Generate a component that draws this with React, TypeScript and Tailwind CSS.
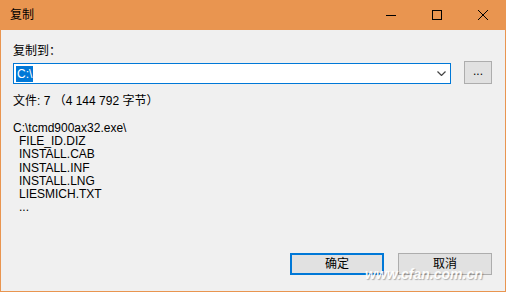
import { useState } from 'react';

const files = ['FILE_ID.DIZ', 'INSTALL.CAB', 'INSTALL.INF', 'INSTALL.LNG', 'LIESMICH.TXT', '...'];

export default function App() {
  const [path] = useState('C:\\');

  return (
    <div
      className="relative w-[506px] h-[292px] flex flex-col bg-[#f0f0f0] border border-t-0 border-[#e99550] text-[12px] text-black overflow-hidden"
      style={{ fontFamily: '"Liberation Sans", "Noto Sans CJK SC", sans-serif' }}
    >
      <div className="h-[30px] -mx-px flex items-center bg-[#e99550] shrink-0">
        <span className="pl-[10px] flex-1">复制</span>
        <div className="flex h-full">
          <div className="w-[46px] flex items-center justify-center">
            <svg width="10" height="10" viewBox="0 0 10 10">
              <path d="M0 5.5h10" stroke="#000" strokeWidth="1" />
            </svg>
          </div>
          <div className="w-[46px] flex items-center justify-center">
            <svg width="10" height="10" viewBox="0 0 10 10">
              <rect x="0.5" y="0.5" width="9" height="9" fill="none" stroke="#000" strokeWidth="1" />
            </svg>
          </div>
          <div className="w-[46px] flex items-center justify-center">
            <svg width="10" height="10" viewBox="0 0 10 10">
              <path d="M0 0L10 10M10 0L0 10" stroke="#000" strokeWidth="1" />
            </svg>
          </div>
        </div>
      </div>

      <div className="flex flex-col flex-1 pl-[12px] pr-[12px] pt-[14px]">
        <div className="h-[14px] leading-[14px]">复制到：</div>
        <div className="flex items-end gap-[13px] mt-[3px]">
          <div className="w-[438px] h-[21px] bg-white border border-[#0078d7] flex items-center pl-[2px] pr-[4px]">
            <span className="bg-[#0078d7] text-white leading-[16px] px-px">{path}</span>
            <span className="flex-1" />
            <svg width="9" height="5" viewBox="0 0 9 5">
              <path d="M0.5 0.5L4.5 4.5L8.5 0.5" fill="none" stroke="#444" strokeWidth="1.2" />
            </svg>
          </div>
          <div className="w-[28px] h-[23px] bg-[#e1e1e1] border border-[#adadad] flex items-center justify-center leading-none pb-[3px]">
            ...
          </div>
        </div>
        <div className="mt-[10px] h-[15px] leading-[15px]">文件: 7 （4 144 792 字节）</div>
        <div className="mt-[13px] flex flex-col leading-[13.2px]">
          <div>C:\tcmd900ax32.exe\</div>
          {files.map((f) => (
            <div key={f} className="pl-[6px]">
              {f}
            </div>
          ))}
        </div>
        <div className="mt-auto mb-[16px] flex justify-end gap-[14px] pr-[1px]">
          <button className="w-[94px] h-[22px] bg-[#e1e1e1] border-2 border-[#0078d7] flex items-center justify-center">
            确定
          </button>
          <button className="w-[94px] h-[22px] bg-[#e1e1e1] border border-[#adadad] flex items-center justify-center">
            取消
          </button>
        </div>
      </div>

      <div
        className="absolute left-[364px] top-[266px] text-[14px] leading-[17px] italic font-bold text-white pointer-events-none opacity-90"
        style={{ textShadow: '1px 1px 1px rgba(0,0,0,0.3)' }}
      >
        www.cfan.com.cn
      </div>
    </div>
  );
}
